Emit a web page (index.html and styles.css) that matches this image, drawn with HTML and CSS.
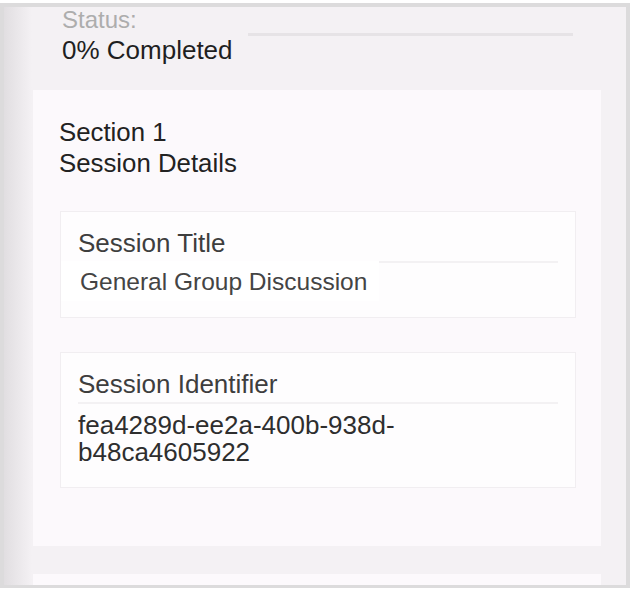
FILE: index.html
```html
<!DOCTYPE html>
<html>
<head>
<meta charset="utf-8">
<link rel="stylesheet" href="styles.css">
</head>
<body>
<div class="frame">
  <div class="status">
    <div class="status-text">
      <div class="status-label">Status:</div>
      <div class="status-value">0% Completed</div>
    </div>
    <div class="progress"></div>
  </div>
  <div class="card">
    <div class="section-head">
      <div>Section 1</div>
      <div>Session Details</div>
    </div>
    <div class="field">
      <div class="field-label">Session Title</div>
      <div class="field-value input">General Group Discussion</div>
    </div>
    <div class="field">
      <div class="field-label">Session Identifier</div>
      <div class="field-value">fea4289d-ee2a-400b-938d-<br>b48ca4605922</div>
    </div>
  </div>
  <div class="card next"></div>
</div>
</body>
</html>
```
FILE: styles.css
```css
html, body {
  margin: 0;
  padding: 0;
  background: #ffffff;
}
body {
  font-family: "Liberation Sans", Arial, sans-serif;
  color: #222;
}
.frame {
  margin-top: 3px;
  width: 630px;
  height: 585px;
  box-sizing: border-box;
  border: 4px solid #dcdbdc;
  border-bottom-width: 3px;
  background: linear-gradient(to right, #e1dee1 0px, #f4f1f4 28px, #f4f1f4 100%);
  overflow: hidden;
}
.status {
  display: flex;
  align-items: flex-start;
  padding-left: 58px;
  height: 83px;
  box-sizing: border-box;
}
.status-text {
  padding-top: 1px;
}
.status-label {
  font-size: 24px;
  line-height: 24px;
  color: #adadad;
}
.status-value {
  font-size: 26px;
  line-height: 30px;
  color: #1f1f1f;
  margin-top: 3px;
}
.progress {
  width: 325px;
  height: 3px;
  background: #e6e3e6;
  margin-left: auto;
  margin-right: 53px;
  margin-top: 26px;
}
.card {
  margin-left: 29px;
  width: 568px;
  background: #fcf9fc;
  padding: 27px 0 58px 0;
  box-sizing: border-box;
}
.section-head {
  padding-left: 26px;
  font-size: 25.8px;
  line-height: 31px;
  color: #222;
  margin-bottom: 32px;
}
.field {
  margin-left: 27px;
  width: 516px;
  box-sizing: border-box;
  background: #fefdfe;
  border: 1px solid #f1eef1;
  padding: 16px 17px 21px 17px;
  margin-bottom: 34px;
}
.field:last-child {
  margin-bottom: 0;
}
.field-label {
  font-size: 26px;
  line-height: 30px;
  color: #3e3e3e;
  padding-bottom: 3px;
  border-bottom: 2px solid #f3f1f3;
}
.field-value {
  font-size: 26px;
  line-height: 27px;
  color: #2e2e2e;
  padding-top: 8px;
}
.field-value.input {
  font-size: 24.5px;
  color: #444;
  margin-left: -17px;
  padding-left: 19px;
  margin-top: -2px;
  padding-top: 7px;
  padding-bottom: 6px;
  margin-bottom: -5px;
  width: 299px;
  background: #ffffff;
}
.card.next {
  margin-top: 28px;
  height: 40px;
  padding: 0;
}
```
